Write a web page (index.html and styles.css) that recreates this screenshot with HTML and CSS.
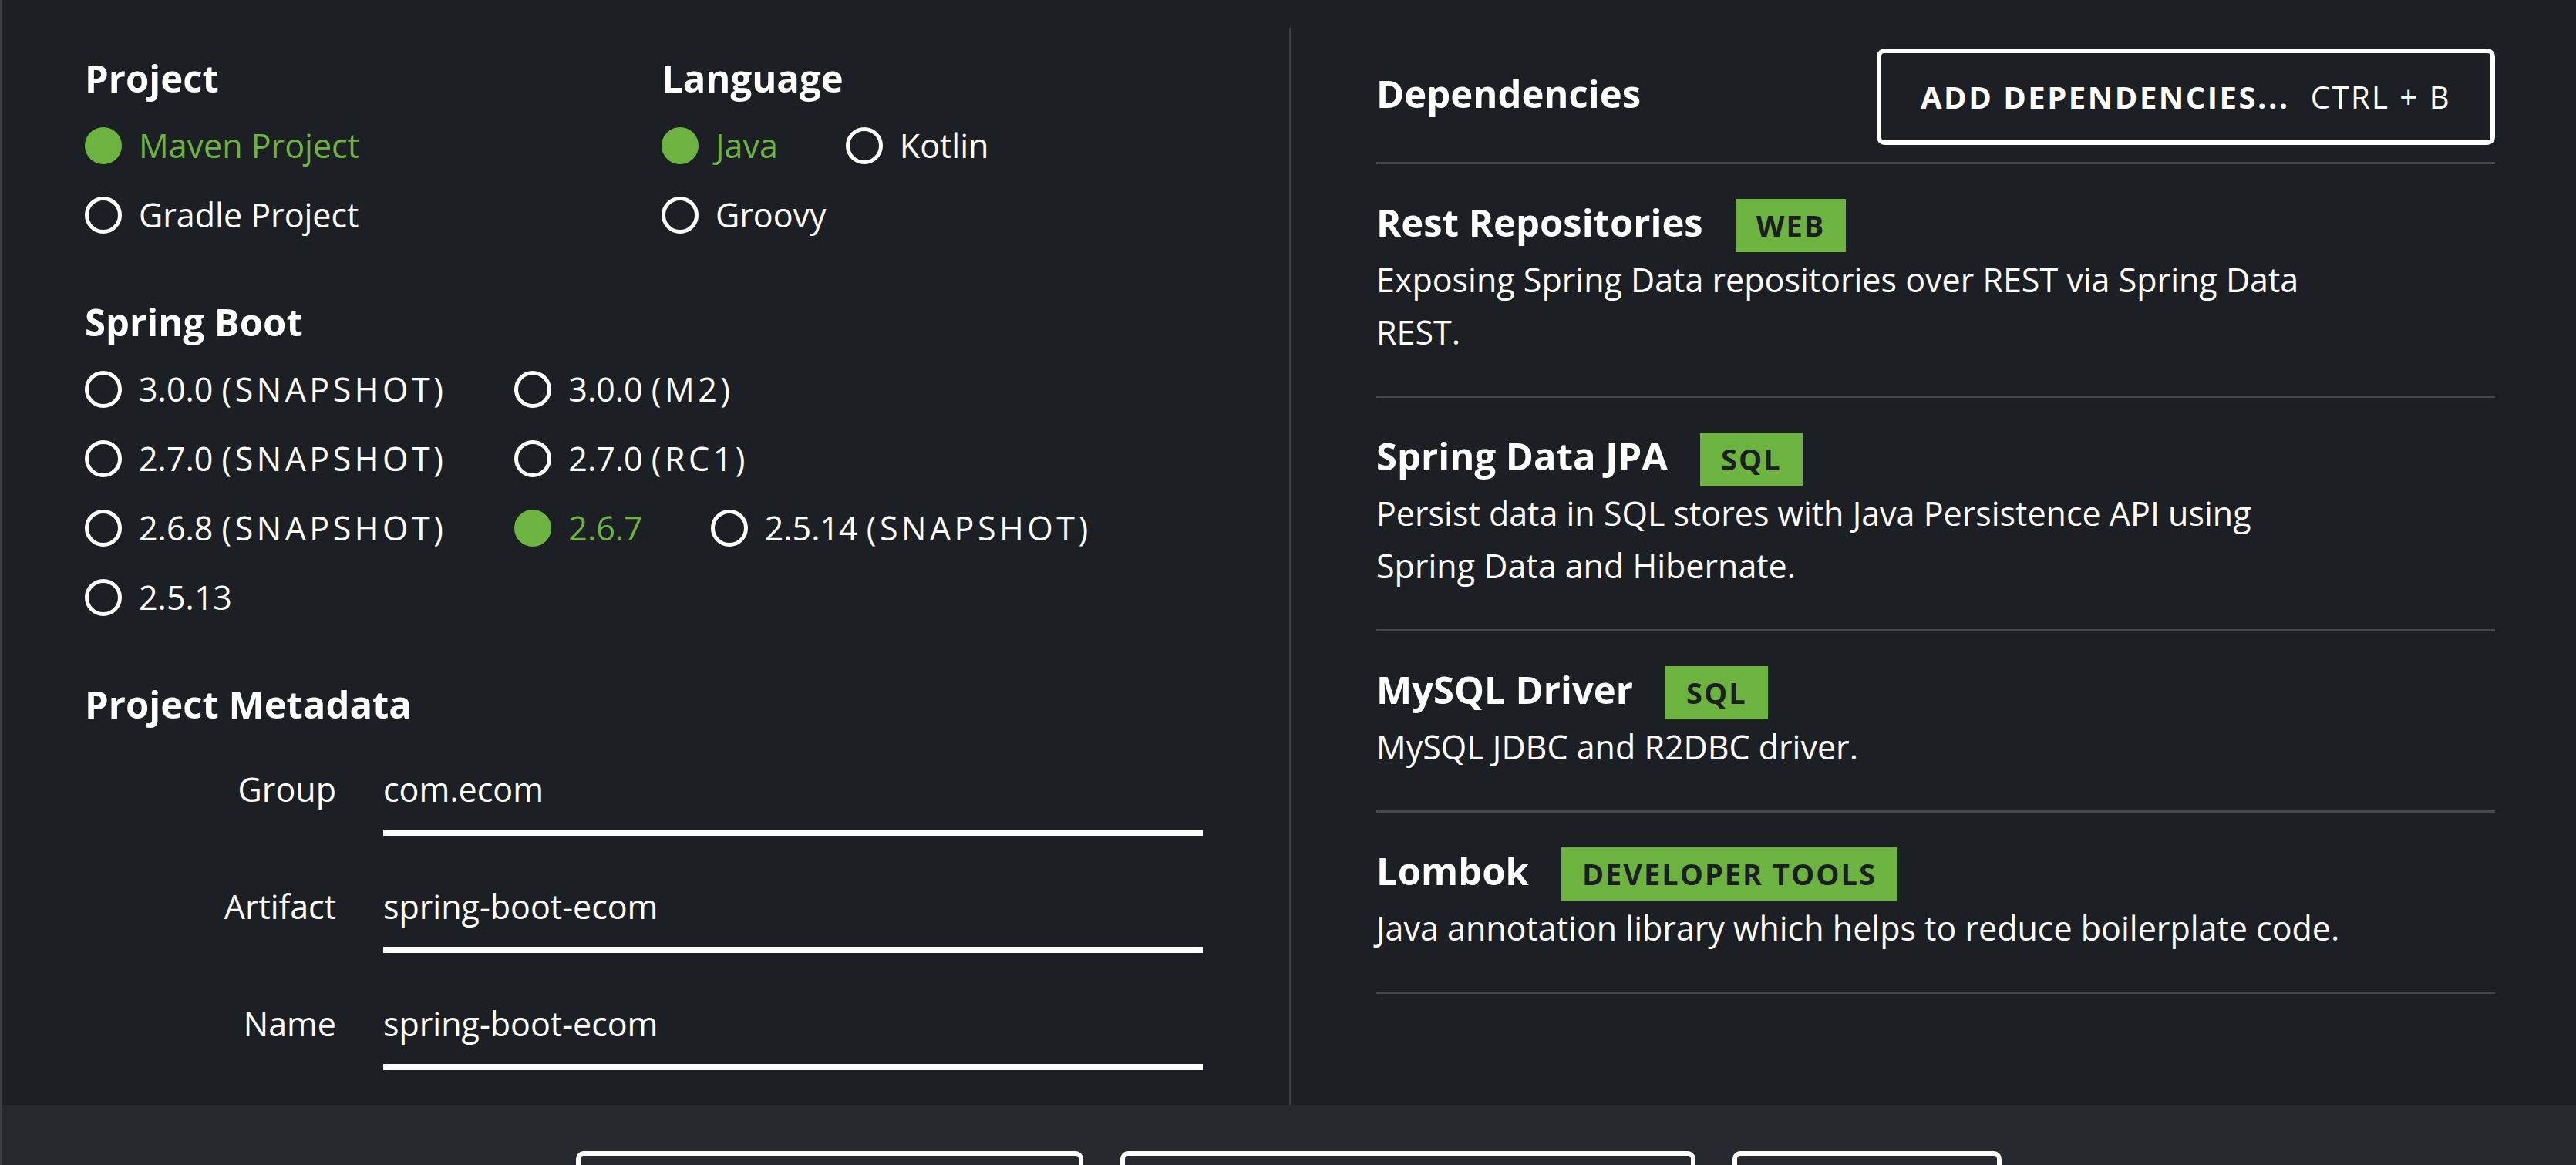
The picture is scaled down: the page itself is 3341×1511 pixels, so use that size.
FILE: index.html
```html
<!DOCTYPE html>
<html lang="en">
<head>
<meta charset="utf-8">
<title>Spring Initializr</title>
<link rel="stylesheet" href="styles.css">
</head>
<body>
<div class="page">
  <main class="main">
    <section class="left">
      <div class="top-row">
        <div class="group">
          <h2 class="section-title">Project</h2>
          <div class="radios">
            <label class="radio checked"><span class="dot"></span><span class="txt">Maven Project</span></label>
            <label class="radio"><span class="dot"></span><span class="txt">Gradle Project</span></label>
          </div>
        </div>
        <div class="group">
          <h2 class="section-title">Language</h2>
          <div class="radios">
            <label class="radio checked"><span class="dot"></span><span class="txt">Java</span></label>
            <label class="radio"><span class="dot"></span><span class="txt">Kotlin</span></label>
            <label class="radio"><span class="dot"></span><span class="txt">Groovy</span></label>
          </div>
        </div>
      </div>

      <div class="group spaced">
        <h2 class="section-title">Spring Boot</h2>
        <div class="radios versions">
          <label class="radio"><span class="dot"></span><span class="txt">3.0.0 <span class="qual">(SNAPSHOT)</span></span></label>
          <label class="radio"><span class="dot"></span><span class="txt">3.0.0 <span class="qual">(M2)</span></span></label>
          <label class="radio"><span class="dot"></span><span class="txt">2.7.0 <span class="qual">(SNAPSHOT)</span></span></label>
          <label class="radio"><span class="dot"></span><span class="txt">2.7.0 <span class="qual">(RC1)</span></span></label>
          <label class="radio"><span class="dot"></span><span class="txt">2.6.8 <span class="qual">(SNAPSHOT)</span></span></label>
          <label class="radio checked"><span class="dot"></span><span class="txt">2.6.7</span></label>
          <label class="radio"><span class="dot"></span><span class="txt">2.5.14 <span class="qual">(SNAPSHOT)</span></span></label>
          <label class="radio"><span class="dot"></span><span class="txt">2.5.13</span></label>
        </div>
      </div>

      <div class="group spaced">
        <h2 class="section-title">Project Metadata</h2>
        <div class="fields">
          <div class="field">
            <label for="f-group">Group</label>
            <input id="f-group" type="text" value="com.ecom">
          </div>
          <div class="field">
            <label for="f-artifact">Artifact</label>
            <input id="f-artifact" type="text" value="spring-boot-ecom">
          </div>
          <div class="field">
            <label for="f-name">Name</label>
            <input id="f-name" type="text" value="spring-boot-ecom">
          </div>
        </div>
      </div>
    </section>

    <section class="right">
      <div class="dep-head">
        <h2 class="section-title head-title">Dependencies</h2>
        <button class="add-btn" type="button"><strong>ADD DEPENDENCIES...</strong><span class="kbd">CTRL + B</span></button>
      </div>
      <ul class="deps">
        <li class="dep">
          <div class="dep-title"><h3>Rest Repositories</h3><span class="badge">Web</span></div>
          <p>Exposing Spring Data repositories over REST via Spring Data REST.</p>
        </li>
        <li class="dep">
          <div class="dep-title"><h3>Spring Data JPA</h3><span class="badge">SQL</span></div>
          <p>Persist data in SQL stores with Java Persistence API using Spring Data and Hibernate.</p>
        </li>
        <li class="dep">
          <div class="dep-title"><h3>MySQL Driver</h3><span class="badge">SQL</span></div>
          <p>MySQL JDBC and R2DBC driver.</p>
        </li>
        <li class="dep">
          <div class="dep-title"><h3>Lombok</h3><span class="badge">Developer Tools</span></div>
          <p>Java annotation library which helps to reduce boilerplate code.</p>
        </li>
      </ul>
    </section>
  </main>

  <footer class="actions">
    <button class="act-btn act-generate" type="button" aria-label="Generate (Ctrl + Enter)"></button>
    <button class="act-btn act-explore" type="button" aria-label="Explore (Ctrl + Space)"></button>
    <button class="act-btn act-share" type="button" aria-label="Share"></button>
  </footer>
</div>
</body>
</html>
```

FILE: styles.css
```css
* {
  box-sizing: border-box;
}

html, body {
  margin: 0;
  height: 100%;
}

body {
  background: #1c1f24;
  color: #ffffff;
  font-family: "Open Sans", "Liberation Sans", sans-serif;
  overflow: hidden;
}

.page {
  height: 100vh;
  display: flex;
  flex-direction: column;
  border-left: 2px solid #3c3f44;
}

.main {
  flex: 0 0 1433px;
  display: grid;
  grid-template-columns: 1670px 1fr;
}

/* ---------- left column ---------- */
.left {
  padding: 71px 112px 0 108px;
}

.section-title {
  margin: 0 0 28px;
  font-size: 49px;
  line-height: 60px;
  font-weight: 700;
}

.top-row {
  display: grid;
  grid-template-columns: 748px 1fr;
}

.group.spaced {
  margin-top: 78px;
}

.radios {
  display: flex;
  flex-wrap: wrap;
  column-gap: 88px;
  row-gap: 30px;
}

.radios.versions {
  max-width: 1340px;
}

.radio {
  display: flex;
  align-items: center;
  gap: 22px;
  font-size: 43px;
  line-height: 60px;
  white-space: nowrap;
  cursor: pointer;
}

.dot {
  flex: none;
  width: 48px;
  height: 48px;
  border-radius: 50%;
  border: 5px solid #ffffff;
}

.radio.checked {
  color: #6db33f;
}

.radio.checked .dot {
  background: #6db33f;
  border-color: #6db33f;
}

.qual {
  letter-spacing: 4.5px;
}

.fields {
  padding-top: 23px;
  display: flex;
  flex-direction: column;
  gap: 62px;
}

.field {
  display: grid;
  grid-template-columns: 326px 1fr;
  column-gap: 61px;
  align-items: start;
}

.field label {
  text-align: right;
  font-size: 43px;
  line-height: 60px;
  font-weight: 500;
}

.field input {
  min-width: 0;
  width: 100%;
  box-sizing: content-box;
  height: 60px;
  padding: 0 0 22px;
  border: 0;
  border-bottom: 8px solid #ffffff;
  background: transparent;
  color: #ffffff;
  font-family: inherit;
  font-size: 43px;
  line-height: 60px;
  outline: none;
}

/* ---------- right column ---------- */
.right {
  margin-top: 36px;
  border-left: 2px solid #3c3f44;
  padding: 27px 105px 0 111px;
}

.dep-head {
  display: flex;
  justify-content: space-between;
  align-items: center;
  padding-bottom: 22px;
  border-bottom: 3px solid #45484d;
}

.head-title {
  margin: 0 0 9px;
}

.add-btn,
.act-btn {
  display: flex;
  align-items: center;
  justify-content: center;
  gap: 27px;
  height: 125px;
  border: 6px solid #ffffff;
  border-radius: 10px;
  background: transparent;
  color: #ffffff;
  font-family: inherit;
  font-size: 40px;
  letter-spacing: 2.5px;
  cursor: pointer;
}

.add-btn {
  width: 802px;
}

.add-btn strong {
  font-weight: 700;
}

.kbd {
  font-weight: 400;
}

.deps {
  list-style: none;
  margin: 0;
  padding: 0;
}

.dep {
  padding: 45px 0 48px;
  border-bottom: 3px solid #45484d;
}

.dep-title {
  display: flex;
  align-items: baseline;
  gap: 42px;
}

.dep-title h3 {
  margin: 0;
  font-size: 49px;
  line-height: 60px;
  font-weight: 700;
}

.badge {
  display: block;
  background: #6db33f;
  color: #1b1e23;
  font-size: 38px;
  line-height: 69px;
  font-weight: 700;
  letter-spacing: 2px;
  text-transform: uppercase;
  padding: 0 27px;
}

.dep p {
  margin: 2px 0 0;
  max-width: 1262px;
  font-size: 43px;
  line-height: 68px;
}

/* ---------- bottom actions ---------- */
.actions {
  flex: 1;
  background: #26292d;
  display: flex;
  justify-content: center;
  align-items: flex-start;
  gap: 48px;
  padding-top: 60px;
  overflow: hidden;
}

.act-btn {
  flex: none;
}

.act-generate {
  width: 658px;
}

.act-explore {
  width: 746px;
}

.act-share {
  width: 349px;
}
```
